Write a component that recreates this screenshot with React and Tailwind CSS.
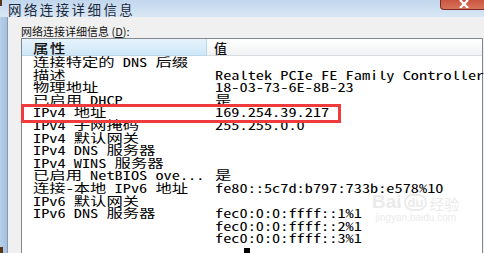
import React from 'react';

const rows = [
  ['连接特定的 DNS 后缀', ''],
  ['描述', 'Realtek PCIe FE Family Controller'],
  ['物理地址', '18-03-73-6E-8B-23'],
  ['已启用 DHCP', '是'],
  ['IPv4 地址', '169.254.39.217'],
  ['IPv4 子网掩码', '255.255.0.0'],
  ['IPv4 默认网关', ''],
  ['IPv4 DNS 服务器', ''],
  ['IPv4 WINS 服务器', ''],
  ['已启用 NetBIOS ove...', '是'],
  ['连接-本地 IPv6 地址', 'fe80::5c7d:b797:733b:e578%10'],
  ['IPv6 默认网关', ''],
  ['IPv6 DNS 服务器', 'fec0:0:0:ffff::1%1'],
  ['', 'fec0:0:0:ffff::2%1'],
  ['', 'fec0:0:0:ffff::3%1'],
];

const Cell = ({ children }) => (
  <span className="inline-block origin-left scale-x-[1.36] whitespace-nowrap">{children}</span>
);

export default function App() {
  return (
    <div className="relative w-[484px] h-[253px] overflow-hidden bg-[#f0f0f0] flex flex-col">
      {/* title bar */}
      <div className="h-[17px] shrink-0 flex items-start justify-between bg-gradient-to-b from-[#c2d7ed] to-[#d9e7f5]">
        <span className="pl-[8px] mt-[2px] text-[13.5px] leading-[15px] tracking-[2.4px] text-[#1b2a3c] font-['Noto_Sans_CJK_SC',sans-serif]">
          网络连接详细信息
        </span>
        <div className="w-[48px] h-[10px] mr-[-4px] rounded-b-[4px] border border-t-0 border-[#7a2a20] bg-gradient-to-b from-[#c9553f] to-[#d9735c] flex items-start justify-center">
          <svg width="14" height="8" viewBox="0 0 14 8">
            <path d="M3 0 L11 8 M11 0 L3 8" stroke="#ffffff" strokeWidth="2.2" />
          </svg>
        </div>
      </div>

      <div className="flex-1 flex min-h-0">
        {/* left window frame */}
        <div className="w-[8px] shrink-0 bg-gradient-to-r from-[#b7cfe8] to-[#a5c1e0] border-r border-[#8a9bb0]" />

        <div className="flex-1 flex flex-col pl-[13px] pt-[8px] min-w-0">
          <div className="h-[13px] text-[11px] leading-[13px] text-[#111] font-['Noto_Sans_CJK_SC',sans-serif]">
            网络连接详细信息 (<span className="underline">D</span>):
          </div>

          <div className="flex-1 mr-[1px] border border-b-0 border-[#828790] bg-white flex flex-col min-h-0">
            {/* header */}
            <div className="h-[17px] shrink-0 flex text-[13px] leading-[17px] text-[#111] font-['Noto_Sans_CJK_SC',sans-serif] font-medium">
              <div className="w-[185px] shrink-0 pl-[11px] bg-gradient-to-b from-[#e6f3fc] to-[#cfe7f8] border-r border-b border-[#bcd6ec]">
                <span className="inline-block origin-left scale-x-[1.2] tracking-[1px]">属性</span>
              </div>
              <div className="flex-1 pl-[7px] bg-gradient-to-b from-[#ffffff] to-[#f1f2f4] border-b border-[#d8dce2]">
                值
              </div>
            </div>

            {/* rows */}
            <div className="flex flex-col text-[12px] text-black font-['Noto_Sans_Mono_CJK_SC','Liberation_Mono','Noto_Sans_CJK_SC',monospace]">
              {rows.map(([k, v], i) => (
                <div key={i} className="h-[12.6px] leading-[12.6px] flex">
                  <div className="w-[185px] shrink-0 pl-[11px]">
                    <Cell>{k}</Cell>
                  </div>
                  <div className="flex-1 pl-[8px]">
                    <Cell>{v}</Cell>
                  </div>
                </div>
              ))}
            </div>
          </div>
        </div>
      </div>

      {/* red highlight annotation */}
      <div className="absolute left-[21px] top-[104px] w-[320px] h-[19px] border-[3px] border-[#ef3b3b]" />

      {/* watermark */}
      <div className="absolute left-[372px] top-[192px] flex flex-col items-center text-[#ebebeb] font-['Liberation_Sans',sans-serif]">
        <div className="flex items-end gap-[2px] leading-none">
          <span className="text-[19px] font-bold">Bai</span>
          <span className="text-[13px] font-bold border-[2px] border-[#ebebeb] rounded-full px-[2px]">du</span>
          <span className="text-[15px] font-['Noto_Sans_CJK_SC',sans-serif]">经验</span>
        </div>
        <span className="text-[10px] leading-[14px]">jingyan.baidu.com</span>
      </div>

      {/* stray marks */}
      <div className="absolute left-[244px] top-[248px] w-[6px] h-[5px] bg-black" />
      <div className="absolute left-0 top-0 w-[2px] h-[6px] bg-[#5a3418]" />
      <div className="absolute left-0 top-[247px] w-[3px] h-[6px] bg-[#5a3418]" />
    </div>
  );
}
